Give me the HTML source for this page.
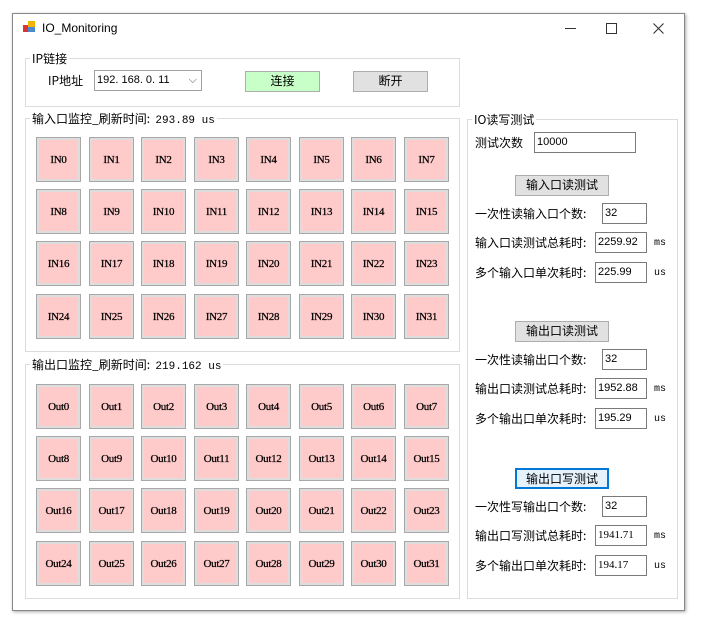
<!DOCTYPE html>
<html><head><meta charset="utf-8"><style>
body{margin:0;width:701px;height:627px;background:#fff;position:relative;overflow:hidden;font-family:"Liberation Sans","Noto Sans CJK SC",sans-serif;font-size:12px;color:#000}
.a{position:absolute}
.win{left:12px;top:13px;width:671px;height:596px;border:1px solid #888;box-shadow:1px 1px 3px #aaa;background:#fff}
.gb{position:absolute;border:1px solid #dcdcdc}
.gl{position:absolute;background:#fff;padding:0 2px;font-size:12px;top:-9px;left:4px;font-family:"Noto Sans CJK SC",sans-serif}
.t{position:absolute;width:43px;height:43px;background:#ffcaca;border:1px solid #a8a8a8;box-shadow:inset 0 0 0 2px #ddd;display:flex;align-items:center;justify-content:center;font-family:"Liberation Serif","Noto Serif CJK SC",serif;font-size:11px;letter-spacing:-0.3px;-webkit-text-stroke:0.25px #000}
.tx{position:absolute;border:1px solid #7a7a7a;background:#fff;font-size:11px;padding-left:2px;box-sizing:border-box;line-height:18px;font-family:"Liberation Sans",sans-serif}
.btn{position:absolute;background:#e1e1e1;border:1px solid #adadad;box-sizing:border-box;text-align:center;font-family:"Noto Sans CJK SC",sans-serif;font-size:12px;line-height:18px}
.lb{position:absolute;font-family:"Noto Sans CJK SC",sans-serif;font-size:12px;line-height:14px}
.u{position:absolute;font-family:"Liberation Mono",monospace;font-size:10px}
</style></head><body>
<div class="a win"></div>
<div class="a" style="left:23px;top:21px;width:12px;height:12px">
<div class="a" style="left:0;top:4px;width:6px;height:7px;background:#d33"></div>
<div class="a" style="left:5px;top:0;width:7px;height:7px;background:#f0b400"></div>
<div class="a" style="left:5px;top:6px;width:7px;height:5px;background:#4a8ad0"></div></div>
<div class="a" style="left:42px;top:21px;font-size:12px">IO_Monitoring</div>
<div class="a" style="left:565px;top:28px;width:11px;height:1px;background:#333"></div>
<div class="a" style="left:606px;top:23px;width:9px;height:9px;border:1px solid #333"></div>
<svg class="a" style="left:653px;top:23px" width="11" height="11"><path d="M0.5 0.5L10.5 10.5M10.5 0.5L0.5 10.5" stroke="#333" stroke-width="1.1"/></svg>

<div class="gb" style="left:25px;top:58px;width:433px;height:47px"><span class="gl">IP链接</span></div>
<div class="lb" style="left:48px;top:74px">IP地址</div>
<div class="tx" style="left:94px;top:70px;width:108px;height:21px;border-color:#a0a0a0">192. 168. 0. 11<span style="position:absolute;right:4px;top:0;color:#555">⌵</span></div>
<div class="btn" style="left:245px;top:71px;width:75px;height:21px;background:#c8ffc8">连接</div>
<div class="btn" style="left:353px;top:71px;width:75px;height:21px">断开</div>

<div class="gb" style="left:25px;top:118px;width:433px;height:232px"><span class="gl">输入口监控_刷新时间: &nbsp;<span style="font-family:'Liberation Mono',monospace;font-size:11px">293.89 us</span></span></div>
<div class="gb" style="left:25px;top:364px;width:433px;height:233px"><span class="gl">输出口监控_刷新时间: &nbsp;<span style="font-family:'Liberation Mono',monospace;font-size:11px">219.162 us</span></span></div>

<div class="t" style="left:36px;top:137px">IN0</div><div class="t" style="left:89px;top:137px">IN1</div><div class="t" style="left:141px;top:137px">IN2</div><div class="t" style="left:194px;top:137px">IN3</div><div class="t" style="left:246px;top:137px">IN4</div><div class="t" style="left:299px;top:137px">IN5</div><div class="t" style="left:351px;top:137px">IN6</div><div class="t" style="left:404px;top:137px">IN7</div>
<div class="t" style="left:36px;top:189px">IN8</div><div class="t" style="left:89px;top:189px">IN9</div><div class="t" style="left:141px;top:189px">IN10</div><div class="t" style="left:194px;top:189px">IN11</div><div class="t" style="left:246px;top:189px">IN12</div><div class="t" style="left:299px;top:189px">IN13</div><div class="t" style="left:351px;top:189px">IN14</div><div class="t" style="left:404px;top:189px">IN15</div>
<div class="t" style="left:36px;top:241px">IN16</div><div class="t" style="left:89px;top:241px">IN17</div><div class="t" style="left:141px;top:241px">IN18</div><div class="t" style="left:194px;top:241px">IN19</div><div class="t" style="left:246px;top:241px">IN20</div><div class="t" style="left:299px;top:241px">IN21</div><div class="t" style="left:351px;top:241px">IN22</div><div class="t" style="left:404px;top:241px">IN23</div>
<div class="t" style="left:36px;top:294px">IN24</div><div class="t" style="left:89px;top:294px">IN25</div><div class="t" style="left:141px;top:294px">IN26</div><div class="t" style="left:194px;top:294px">IN27</div><div class="t" style="left:246px;top:294px">IN28</div><div class="t" style="left:299px;top:294px">IN29</div><div class="t" style="left:351px;top:294px">IN30</div><div class="t" style="left:404px;top:294px">IN31</div>

<div class="t" style="left:36px;top:384px">Out0</div><div class="t" style="left:89px;top:384px">Out1</div><div class="t" style="left:141px;top:384px">Out2</div><div class="t" style="left:194px;top:384px">Out3</div><div class="t" style="left:246px;top:384px">Out4</div><div class="t" style="left:299px;top:384px">Out5</div><div class="t" style="left:351px;top:384px">Out6</div><div class="t" style="left:404px;top:384px">Out7</div>
<div class="t" style="left:36px;top:436px">Out8</div><div class="t" style="left:89px;top:436px">Out9</div><div class="t" style="left:141px;top:436px">Out10</div><div class="t" style="left:194px;top:436px">Out11</div><div class="t" style="left:246px;top:436px">Out12</div><div class="t" style="left:299px;top:436px">Out13</div><div class="t" style="left:351px;top:436px">Out14</div><div class="t" style="left:404px;top:436px">Out15</div>
<div class="t" style="left:36px;top:488px">Out16</div><div class="t" style="left:89px;top:488px">Out17</div><div class="t" style="left:141px;top:488px">Out18</div><div class="t" style="left:194px;top:488px">Out19</div><div class="t" style="left:246px;top:488px">Out20</div><div class="t" style="left:299px;top:488px">Out21</div><div class="t" style="left:351px;top:488px">Out22</div><div class="t" style="left:404px;top:488px">Out23</div>
<div class="t" style="left:36px;top:541px">Out24</div><div class="t" style="left:89px;top:541px">Out25</div><div class="t" style="left:141px;top:541px">Out26</div><div class="t" style="left:194px;top:541px">Out27</div><div class="t" style="left:246px;top:541px">Out28</div><div class="t" style="left:299px;top:541px">Out29</div><div class="t" style="left:351px;top:541px">Out30</div><div class="t" style="left:404px;top:541px">Out31</div>

<div class="gb" style="left:467px;top:119px;width:209px;height:478px"><span class="gl">IO读写测试</span></div>
<div class="lb" style="left:475px;top:136px">测试次数</div>
<div class="tx" style="left:534px;top:132px;width:102px;height:21px">10000</div>
<div class="btn" style="left:515px;top:175px;width:94px;height:21px">输入口读测试</div>
<div class="lb" style="left:475px;top:207px">一次性读输入口个数:</div>
<div class="tx" style="left:602px;top:203px;width:45px;height:21px">32</div>
<div class="lb" style="left:475px;top:236px">输入口读测试总耗时:</div>
<div class="tx" style="left:595px;top:232px;width:52px;height:21px">2259.92</div><div class="u" style="left:654px;top:238px">ms</div>
<div class="lb" style="left:475px;top:266px">多个输入口单次耗时:</div>
<div class="tx" style="left:595px;top:262px;width:52px;height:21px">225.99</div><div class="u" style="left:654px;top:268px">us</div>

<div class="btn" style="left:515px;top:321px;width:94px;height:21px">输出口读测试</div>
<div class="lb" style="left:475px;top:353px">一次性读输出口个数:</div>
<div class="tx" style="left:602px;top:349px;width:45px;height:21px">32</div>
<div class="lb" style="left:475px;top:382px">输出口读测试总耗时:</div>
<div class="tx" style="left:595px;top:378px;width:52px;height:21px">1952.88</div><div class="u" style="left:654px;top:384px">ms</div>
<div class="lb" style="left:475px;top:412px">多个输出口单次耗时:</div>
<div class="tx" style="left:595px;top:408px;width:52px;height:21px">195.29</div><div class="u" style="left:654px;top:414px">us</div>

<div class="btn" style="left:515px;top:468px;width:94px;height:21px;border:2px solid #0078d7;background:#e5f1fb;line-height:17px">输出口写测试</div>
<div class="lb" style="left:475px;top:500px">一次性写输出口个数:</div>
<div class="tx" style="left:602px;top:496px;width:45px;height:21px">32</div>
<div class="lb" style="left:475px;top:529px">输出口写测试总耗时:</div>
<div class="tx" style="left:595px;top:525px;width:52px;height:21px;font-family:'Liberation Serif',serif">1941.71</div><div class="u" style="left:654px;top:531px">ms</div>
<div class="lb" style="left:475px;top:559px">多个输出口单次耗时:</div>
<div class="tx" style="left:595px;top:555px;width:52px;height:21px;font-family:'Liberation Serif',serif">194.17</div><div class="u" style="left:654px;top:561px">us</div>
</body></html>
